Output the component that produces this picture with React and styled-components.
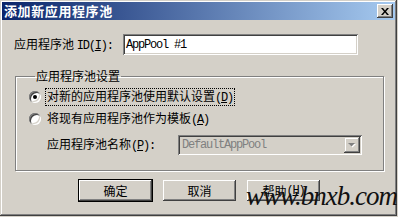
import styled, { createGlobalStyle } from "styled-components";

const GlobalStyle = createGlobalStyle`
  html, body {
    margin: 0;
    padding: 0;
    background: #d4d0c8;
  }
  body {
    font-family: "Noto Sans CJK SC", sans-serif;
    font-size: 12px;
    color: #000;
  }
`;

const Window = styled.div`
  position: relative;
  box-sizing: border-box;
  width: 397px;
  height: 216px;
  padding: 2px;
  background: #d4d0c8;
  box-shadow: inset -1px -1px #404040, inset 1px 1px #d4d0c8,
    inset -2px -2px #808080, inset 2px 2px #fff;
  display: flex;
  flex-direction: column;
  overflow: hidden;
`;

const TitleBar = styled.div`
  height: 18px;
  display: flex;
  align-items: center;
  justify-content: space-between;
  padding: 0 2px 0 2px;
  background: linear-gradient(to right, #0a246a, #a6caf0);
`;

const Title = styled.span`
  color: #fff;
  font-weight: bold;
  font-size: 13px;
  line-height: 18px;
  letter-spacing: 0.6px;
`;

const CloseButton = styled.div`
  box-sizing: border-box;
  width: 16px;
  height: 14px;
  display: flex;
  align-items: center;
  justify-content: center;
  background: #d4d0c8;
  box-shadow: inset -1px -1px #404040, inset 1px 1px #fff,
    inset -2px -2px #808080, inset 2px 2px #d4d0c8;
`;

const Body = styled.div`
  display: flex;
  flex-direction: column;
  padding: 0 0 0 12px;
`;

const IdRow = styled.div`
  display: flex;
  align-items: center;
  margin-top: 14px;
`;

const Label = styled.span`
  width: ${(p) => p.$width}px;
  flex: none;
  white-space: nowrap;
  line-height: 14px;
`;

const Mono = styled.span`
  font-family: "Liberation Mono", monospace;
  font-size: 12px;
  letter-spacing: -1.2px;
`;

const TextBox = styled.div`
  box-sizing: border-box;
  width: 235px;
  height: 21px;
  padding: 2px 3px;
  display: flex;
  align-items: center;
  background: #fff;
  font-family: "Liberation Mono", monospace;
  font-size: 12px;
  letter-spacing: -1.2px;
  box-shadow: inset 1px 1px #808080, inset -1px -1px #fff,
    inset 2px 2px #404040, inset -2px -2px #d4d0c8;
`;

const Group = styled.fieldset`
  box-sizing: border-box;
  width: 369px;
  margin: 14px 0 0 1px;
  padding: 6px 0 15px 13px;
  border: 1px solid #808080;
  box-shadow: inset 1px 1px #fff, 1px 1px #fff;
  min-inline-size: 0;
`;

const Legend = styled.legend`
  margin-left: 6px;
  padding: 0 1px;
  line-height: 14px;
`;

const RadioRow = styled.div`
  display: flex;
  align-items: center;
  height: 16px;
  margin-top: ${(p) => p.$top || 0}px;
`;

const Radio = styled.span`
  box-sizing: border-box;
  width: 12px;
  height: 12px;
  flex: none;
  border-radius: 50%;
  background: #fff;
  box-shadow: inset 1px 1px #808080, inset -1px -1px #fff,
    inset 2px 2px #404040, inset -2px -2px #d4d0c8;
  margin-right: 5px;
  display: flex;
  align-items: center;
  justify-content: center;

  &::after {
    content: "";
    width: 4px;
    height: 4px;
    border-radius: 50%;
    background: ${(p) => (p.$checked ? "#000" : "transparent")};
  }
`;

const RadioText = styled.span`
  line-height: 14px;
  padding: 0 1px;
  border: 1px dotted ${(p) => (p.$focus ? "#000" : "transparent")};
  margin-left: -1px;
`;

const PoolRow = styled.div`
  display: flex;
  align-items: center;
  margin-top: 8px;
  padding-left: 18px;
`;

const Combo = styled.div`
  box-sizing: border-box;
  width: 184px;
  height: 20px;
  padding: 2px;
  display: flex;
  align-items: center;
  background: #d4d0c8;
  box-shadow: inset 1px 1px #808080, inset -1px -1px #fff,
    inset 2px 2px #404040, inset -2px -2px #d4d0c8;
`;

const ComboText = styled.span`
  flex: 1;
  padding-left: 2px;
  color: #808080;
  font-family: "Liberation Mono", monospace;
  font-size: 12px;
  letter-spacing: -1.2px;
`;

const DropButton = styled.div`
  box-sizing: border-box;
  width: 16px;
  height: 16px;
  display: flex;
  align-items: center;
  justify-content: center;
  background: #d4d0c8;
  box-shadow: inset -1px -1px #404040, inset 1px 1px #d4d0c8,
    inset -2px -2px #808080, inset 2px 2px #fff;
`;

const Buttons = styled.div`
  display: flex;
  gap: 9px;
  margin: 8px 0 0 64px;
`;

const Button = styled.div`
  box-sizing: border-box;
  width: 75px;
  height: 23px;
  display: flex;
  align-items: center;
  justify-content: center;
  background: #d4d0c8;
  line-height: 14px;
  border: 1px solid ${(p) => (p.$default ? "#000" : "transparent")};
  box-shadow: inset -1px -1px #404040, inset 1px 1px #fff,
    inset -2px -2px #808080;
`;

const Watermark = styled.div`
  position: absolute;
  left: 246px;
  top: 183px;
  font-family: "Liberation Serif", serif;
  font-style: italic;
  font-size: 27px;
  line-height: 27px;
  letter-spacing: -1px;
  color: #111;
  white-space: nowrap;
`;

export default function App() {
  return (
    <>
      <GlobalStyle />
      <Window>
        <TitleBar>
          <Title>添加新应用程序池</Title>
          <CloseButton>
            <svg width="8" height="7" viewBox="0 0 8 7">
              <path d="M0 0h2l2 2.5L6 0h2L5 3.5 8 7H6L4 4.5 2 7H0l3-3.5z" fill="#000" />
            </svg>
          </CloseButton>
        </TitleBar>
        <Body>
          <IdRow>
            <Label $width={109}>
              应用程序池 <Mono>ID(<u>I</u>):</Mono>
            </Label>
            <TextBox>AppPool #1</TextBox>
          </IdRow>
          <Group>
            <Legend>应用程序池设置</Legend>
            <RadioRow>
              <Radio $checked />
              <RadioText $focus>
                对新的应用程序池使用默认设置<Mono>(<u>D</u>)</Mono>
              </RadioText>
            </RadioRow>
            <RadioRow $top={6}>
              <Radio />
              <RadioText>
                将现有应用程序池作为模板<Mono>(<u>A</u>)</Mono>
              </RadioText>
            </RadioRow>
            <PoolRow>
              <Label $width={131}>
                应用程序池名称<Mono>(<u>P</u>):</Mono>
              </Label>
              <Combo>
                <ComboText>DefaultAppPool</ComboText>
                <DropButton>
                  <svg width="8" height="5" viewBox="0 0 8 5">
                    <path d="M1 1h7L4.5 4.5z" fill="#fff" />
                    <path d="M0 0h7L3.5 3.5z" fill="#808080" />
                  </svg>
                </DropButton>
              </Combo>
            </PoolRow>
          </Group>
          <Buttons>
            <Button $default>确定</Button>
            <Button>取消</Button>
            <Button>
              帮助<Mono>(<u>H</u>)</Mono>
            </Button>
          </Buttons>
        </Body>
        <Watermark>www.bnxb.com</Watermark>
      </Window>
    </>
  );
}
